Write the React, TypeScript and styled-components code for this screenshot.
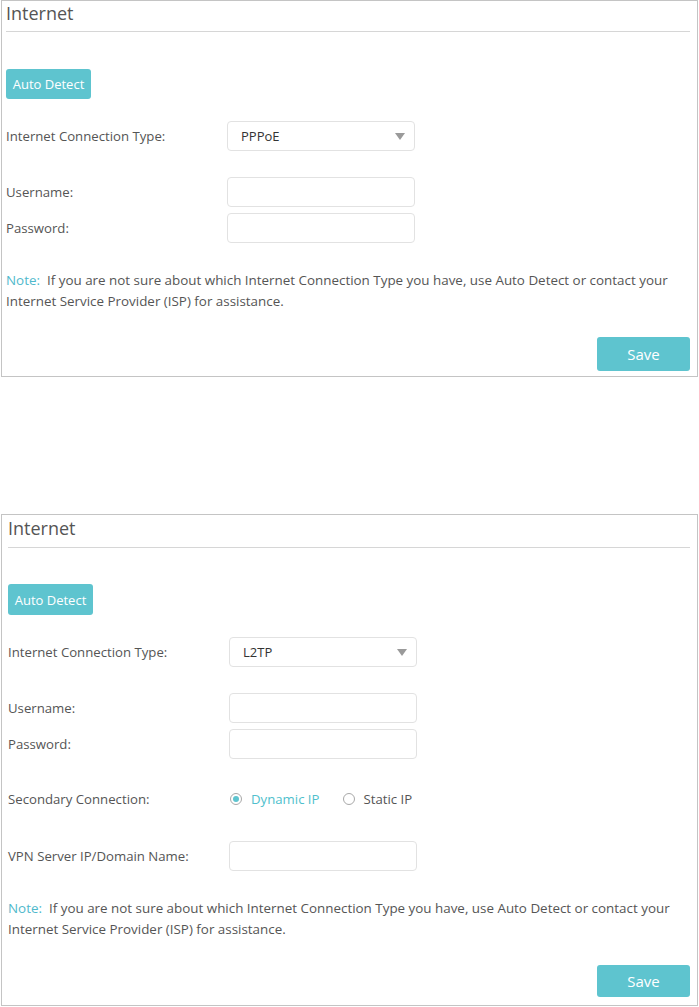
import React from "react";
import styled, { createGlobalStyle } from "styled-components";

const Global = createGlobalStyle`
  html, body { margin: 0; padding: 0; background: #ffffff; }
  body { font-family: "Open Sans", "Liberation Sans", Arial, sans-serif; color: #555555; }
`;

const TEAL = "#5ec4cf";

const Page = styled.div`
  display: flex;
  flex-direction: column;
  gap: 137px;
  padding-left: 1px;
  width: 697px;
`;

const Panel = styled.section<{ $padLeft: number; $padBottom: number }>`
  border: 1px solid #c4c4c4;
  padding: 0 7px ${(p) => p.$padBottom}px ${(p) => p.$padLeft}px;
  display: flex;
  flex-direction: column;
  align-items: flex-start;
`;

const Header = styled.h2<{ $h: number }>`
  align-self: stretch;
  margin: 0;
  height: ${(p) => p.$h}px;
  border-bottom: 1px solid #d6d6d6;
  font-size: 18px;
  font-weight: 400;
  line-height: ${(p) => p.$h - 6}px;
  color: #555555;
`;

const TealButton = styled.button<{ $w: number; $h: number; $mt: number; $fs: number; $right?: boolean }>`
  width: ${(p) => p.$w}px;
  height: ${(p) => p.$h}px;
  margin-top: ${(p) => p.$mt}px;
  align-self: ${(p) => (p.$right ? "flex-end" : "flex-start")};
  background: ${TEAL};
  border: none;
  border-radius: 3px;
  color: #ffffff;
  font-family: "Open Sans", "Liberation Sans", Arial, sans-serif;
  font-size: ${(p) => p.$fs}px;
  padding: 0;
  cursor: pointer;
`;

const Row = styled.div<{ $mt: number }>`
  display: flex;
  align-items: center;
  height: 30px;
  margin-top: ${(p) => p.$mt}px;
`;

const Label = styled.label`
  width: 221px;
  font-size: 13.2px;
  color: #555555;
`;

const Field = styled.div`
  width: 188px;
  height: 30px;
  box-sizing: border-box;
  border: 1px solid #e2e2e2;
  border-radius: 4px;
  background: #ffffff;
  display: flex;
  align-items: center;
  justify-content: space-between;
  padding: 0 9px 0 13px;
  font-size: 13px;
  color: #333333;
`;

const Arrow = styled.span`
  width: 0;
  height: 0;
  border-left: 5px solid transparent;
  border-right: 5px solid transparent;
  border-top: 7px solid #9a9a9a;
`;

const RadioGroup = styled.div`
  display: flex;
  align-items: center;
  padding-left: 1px;
`;

const RadioItem = styled.span<{ $on?: boolean }>`
  display: flex;
  align-items: center;
  gap: 9px;
  margin-right: 23px;
  font-size: 13.2px;
  color: ${(p) => (p.$on ? "#4fbfcd" : "#555555")};
`;

const RadioCircle = styled.span<{ $on?: boolean }>`
  width: 12px;
  height: 12px;
  box-sizing: border-box;
  border-radius: 50%;
  border: 1px solid #a8a8a8;
  display: flex;
  align-items: center;
  justify-content: center;
  &::after {
    content: "";
    width: 6px;
    height: 6px;
    border-radius: 50%;
    background: ${(p) => (p.$on ? TEAL : "transparent")};
  }
`;

const Note = styled.p<{ $mt: number }>`
  margin: ${(p) => p.$mt}px 0 0 0;
  font-size: 13.4px;
  line-height: 21px;
  color: #555555;
  width: 682px;
`;

const NoteTag = styled.span`
  color: #4fb9cc;
  margin-right: 7px;
`;

function NoteText({ mt }: { mt: number }) {
  return (
    <Note $mt={mt}>
      <NoteTag>Note:</NoteTag>
      If you are not sure about which Internet Connection Type you have, use Auto Detect or contact your
      Internet Service Provider (ISP) for assistance.
    </Note>
  );
}

export default function App() {
  return (
    <>
      <Global />
      <Page>
        <Panel $padLeft={4} $padBottom={5}>
          <Header $h={30}>Internet</Header>
          <TealButton $w={85} $h={30} $mt={37} $fs={13}>Auto Detect</TealButton>
          <Row $mt={22}>
            <Label>Internet Connection Type:</Label>
            <Field>
              PPPoE
              <Arrow />
            </Field>
          </Row>
          <Row $mt={26}>
            <Label>Username:</Label>
            <Field />
          </Row>
          <Row $mt={6}>
            <Label>Password:</Label>
            <Field />
          </Row>
          <NoteText mt={27} />
          <TealButton $w={93} $h={34} $mt={25} $fs={15} $right>Save</TealButton>
        </Panel>

        <Panel $padLeft={6} $padBottom={8}>
          <Header $h={32}>Internet</Header>
          <TealButton $w={85} $h={31} $mt={36} $fs={13}>Auto Detect</TealButton>
          <Row $mt={22}>
            <Label>Internet Connection Type:</Label>
            <Field>
              L2TP
              <Arrow />
            </Field>
          </Row>
          <Row $mt={26}>
            <Label>Username:</Label>
            <Field />
          </Row>
          <Row $mt={6}>
            <Label>Password:</Label>
            <Field />
          </Row>
          <Row $mt={25}>
            <Label>Secondary Connection:</Label>
            <RadioGroup>
              <RadioItem $on>
                <RadioCircle $on />
                Dynamic IP
              </RadioItem>
              <RadioItem>
                <RadioCircle />
                Static IP
              </RadioItem>
            </RadioGroup>
          </Row>
          <Row $mt={27}>
            <Label>VPN Server IP/Domain Name:</Label>
            <Field />
          </Row>
          <NoteText mt={27} />
          <TealButton $w={93} $h={32} $mt={25} $fs={15} $right>Save</TealButton>
        </Panel>
      </Page>
    </>
  );
}
